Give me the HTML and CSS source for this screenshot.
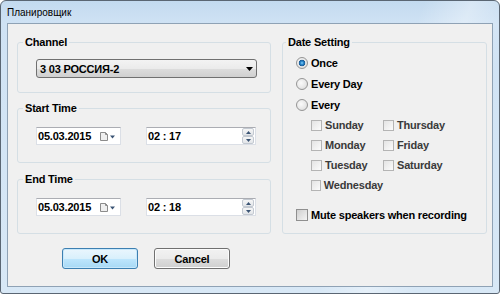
FILE: index.html
```html
<!DOCTYPE html>
<html lang="ru">
<head>
  <meta charset="UTF-8">
  <title>Планировщик</title>
  <link rel="stylesheet" href="styles.css">
</head>
<body>
  <div class="window">
    <div class="titlebar">Планировщик</div>
    <div class="client">
      <div class="left">
        <div class="group group-channel">
          <span class="group-title">Channel</span>
          <div class="combo">
            <span>3 03 РОССИЯ-2</span>
            <svg width="7" height="4" viewBox="0 0 7 4"><path d="M0 0h7L3.5 4z" fill="#000"/></svg>
          </div>
        </div>

        <div class="group group-time">
          <span class="group-title">Start Time</span>
          <div class="time-row">
            <div class="date-field">
              <span>05.03.2015</span>
              <svg width="15" height="9" viewBox="0 0 15 9"><path d="M0.5 0.5h5l2 2v6h-7z" fill="#efefef" stroke="#8c8c8c"/><path d="M5.5 0.5v2h2" fill="none" stroke="#8c8c8c"/><path d="M10 3.5h5l-2.5 3z" fill="#3b5474"/></svg>
            </div>
            <div class="time-field">
              <span>02 : 17</span>
              <div class="spin">
                <div class="spin-btn"><svg width="5" height="3" viewBox="0 0 5 3"><path d="M0 3h5L2.5 0z" fill="#3b5474"/></svg></div>
                <div class="spin-btn"><svg width="5" height="3" viewBox="0 0 5 3"><path d="M0 0h5L2.5 3z" fill="#3b5474"/></svg></div>
              </div>
            </div>
          </div>
        </div>

        <div class="group group-time group-end">
          <span class="group-title">End Time</span>
          <div class="time-row">
            <div class="date-field">
              <span>05.03.2015</span>
              <svg width="15" height="9" viewBox="0 0 15 9"><path d="M0.5 0.5h5l2 2v6h-7z" fill="#efefef" stroke="#8c8c8c"/><path d="M5.5 0.5v2h2" fill="none" stroke="#8c8c8c"/><path d="M10 3.5h5l-2.5 3z" fill="#3b5474"/></svg>
            </div>
            <div class="time-field">
              <span>02 : 18</span>
              <div class="spin">
                <div class="spin-btn"><svg width="5" height="3" viewBox="0 0 5 3"><path d="M0 3h5L2.5 0z" fill="#3b5474"/></svg></div>
                <div class="spin-btn"><svg width="5" height="3" viewBox="0 0 5 3"><path d="M0 0h5L2.5 3z" fill="#3b5474"/></svg></div>
              </div>
            </div>
          </div>
        </div>

        <div class="buttons">
          <button class="btn btn-default">OK</button>
          <button class="btn">Cancel</button>
        </div>
      </div>

      <div class="group group-date">
        <span class="group-title">Date Setting</span>
        <div class="option first"><span class="radio checked"></span>Once</div>
        <div class="option"><span class="radio"></span>Every Day</div>
        <div class="option"><span class="radio"></span>Every</div>
        <div class="days">
          <div class="day"><span class="check"></span>Sunday</div>
          <div class="day"><span class="check"></span>Thursday</div>
          <div class="day"><span class="check"></span>Monday</div>
          <div class="day"><span class="check"></span>Friday</div>
          <div class="day"><span class="check"></span>Tuesday</div>
          <div class="day"><span class="check"></span>Saturday</div>
          <div class="day"><span class="check"></span>Wednesday</div>
        </div>
        <div class="option mute"><span class="check check-mute"></span>Mute speakers when recording</div>
      </div>
    </div>
  </div>
</body>
</html>
```

FILE: styles.css
```css
/* Окно */
body {
  margin: 0;
  font-family: "Liberation Sans", Arial, sans-serif;
  font-size: 11px;
  letter-spacing: -0.2px;
  color: #000;
}
.window {
  width: 500px;
  height: 294px;
  box-sizing: border-box;
  border: 1px solid #5a6673;
  border-radius: 6px 6px 3px 3px;
  padding: 22px 6px 6px 6px;
  background: linear-gradient(110deg, rgba(255,255,255,0) 70%, rgba(255,255,255,0.35) 78%, rgba(255,255,255,0) 86%),
              linear-gradient(to bottom, #c3daef 0, #cfe2f4 22px, #d8e8f6 100%);
  position: relative;
}
.titlebar {
  position: absolute;
  top: 5px;
  left: 6px;
  font-size: 10px;
  letter-spacing: 0;
  line-height: 14px;
  color: #000;
}
.client {
  width: 486px;
  height: 264px;
  box-sizing: border-box;
  border: 1px solid #8fa2b5;
  background: #f0f0f0;
  display: flex;
  padding: 18px 0 0 9px;
  gap: 11px;
}
.left {
  width: 254px;
  display: flex;
  flex-direction: column;
}

/* Группы */
.group {
  box-sizing: border-box;
  border: 1px solid #d5dfe5;
  border-radius: 3px;
}
.group-title {
  display: block;
  width: fit-content;
  height: 13px;
  line-height: 13px;
  margin: -7px 0 0 5px;
  padding: 0 2px;
  background: #f0f0f0;
  font-weight: bold;
}
.group-channel {
  height: 51px;
}
.group-time {
  height: 55px;
  margin-top: 15px;
}
.group-end {
  margin-top: 16px;
}
.group-date {
  width: 205px;
  height: 192px;
}
.group-date .group-title {
  margin-left: 3px;
}

/* Поля */
.combo {
  width: 221px;
  height: 19px;
  box-sizing: border-box;
  margin: 10px 0 0 18px;
  border: 1px solid #707070;
  border-radius: 3px;
  background: linear-gradient(to bottom, #f3f3f3 0, #ebebeb 50%, #dddddd 51%, #d0d0d0 100%);
  display: flex;
  align-items: center;
  justify-content: space-between;
  padding: 0 3px 0 3px;
  font-weight: bold;
}
.time-row {
  display: flex;
  gap: 25px;
  margin: 12px 0 0 18px;
}
.date-field, .time-field {
  height: 18px;
  box-sizing: border-box;
  border: 1px solid #dbdfe6;
  border-top-color: #abadb3;
  background: #fff;
  display: flex;
  align-items: center;
  font-weight: bold;
}
.date-field {
  width: 85px;
  padding: 0 5px 0 1px;
  justify-content: space-between;
}
.time-field {
  width: 110px;
  padding: 0 0 0 1px;
  justify-content: space-between;
}
.spin {
  display: flex;
  flex-direction: column;
  width: 12px;
  height: 16px;
  margin-right: 1px;
}
.spin-btn {
  height: 8px;
  box-sizing: border-box;
  border: 1px solid #c3c9d1;
  border-radius: 2px;
  background: linear-gradient(to bottom, #f6f6f6, #e2e5e9);
  display: flex;
  align-items: center;
  justify-content: center;
}

/* Кнопки */
.buttons {
  display: flex;
  gap: 16px;
  margin: 14px 0 0 45px;
}
.btn {
  width: 76px;
  height: 21px;
  box-sizing: border-box;
  border: 1px solid #707070;
  border-radius: 3px;
  background: linear-gradient(to bottom, #f2f2f2 0, #ebebeb 50%, #dddddd 51%, #cfcfcf 100%);
  box-shadow: inset 0 0 0 1px #fcfcfc;
  font-family: "Liberation Sans", Arial, sans-serif;
  font-size: 11px;
  font-weight: bold;
  letter-spacing: -0.2px;
  color: #000;
  padding: 0;
}
.btn-default {
  border-color: #3c7fb1;
  background: linear-gradient(to bottom, #eaf6fd 0, #d9f0fc 50%, #bee6fd 51%, #a7d9f5 100%);
  box-shadow: inset 0 0 0 1px #c8e8fb;
}

/* Переключатели */
.option {
  display: flex;
  align-items: center;
  height: 21px;
  padding-left: 13px;
  gap: 3px;
  font-weight: bold;
}
.option.first {
  margin-top: 3px;
}
.radio {
  width: 12px;
  height: 12px;
  box-sizing: border-box;
  border-radius: 50%;
  border: 1px solid #959595;
  background: radial-gradient(circle at 40% 40%, #fafafa 0, #e6e6e6 60%, #d0d0d0 100%);
}
.radio.checked {
  background: radial-gradient(circle, #8fd3f7 0, #2a8ad0 1.5px, #1b5a94 3px, rgba(0,0,0,0) 3.6px),
              radial-gradient(circle at 40% 40%, #fafafa 0, #e6e6e6 60%, #d0d0d0 100%);
}
.days {
  display: grid;
  grid-template-columns: 72px 72px;
  grid-auto-rows: 20px;
  padding-left: 28px;
}
.day {
  display: flex;
  align-items: center;
  gap: 3px;
  font-weight: bold;
  color: #3a3a3a;
}
.check {
  width: 11px;
  height: 11px;
  box-sizing: border-box;
  border: 1px solid #b4b4b4;
  background: linear-gradient(135deg, #e4e4e4, #fbfbfb);
}
.option.mute {
  margin-top: 10px;
  height: 20px;
}
.check-mute {
  width: 12px;
  height: 12px;
  border-color: #8f8f8f;
  background: linear-gradient(135deg, #cfcfcf, #f4f4f4);
}
```
